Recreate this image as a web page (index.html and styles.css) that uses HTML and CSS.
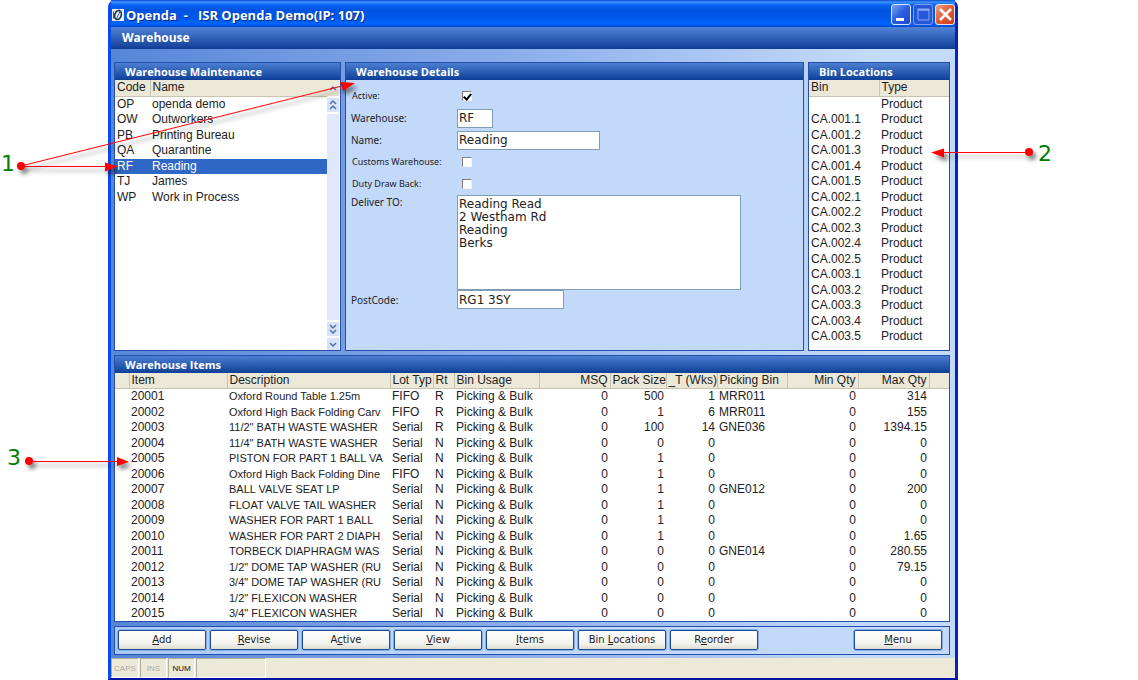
FILE: index.html
```html
<!DOCTYPE html>
<html lang="en">
<head>
<meta charset="utf-8">
<title>Openda - ISR Openda Demo</title>
<link rel="stylesheet" href="styles.css">
</head>
<body>
<main class="window">
  <header class="titlebar">
    <svg class="app-icon" width="12" height="12" viewBox="0 0 12 12" aria-hidden="true"><rect width="12" height="12" fill="#e8eef4"/><ellipse cx="6" cy="6" rx="3.2" ry="4.6" fill="none" stroke="#14304c" stroke-width="1.6" transform="rotate(18 6 6)"/><path d="M8.5 1.5 4 10.5M1.5 2.500v7" stroke="#3c6080" stroke-width="1"/></svg>
    <h1 class="title">Openda&nbsp; -&nbsp;&nbsp; ISR Openda Demo(IP: 107)</h1>
    <div class="caption-buttons">
      <button class="cap" aria-label="Minimize"><svg width="19" height="19" viewBox="0 0 19 19"><path d="M4 13h8v3H4z" fill="#fff"/></svg></button>
      <button class="cap cap-off" aria-label="Maximize"><svg width="19" height="19" viewBox="0 0 19 19"><path d="M4 5h11v10H4z" fill="none" stroke="#8aa8f4"/><path d="M3.500 4.500h12" stroke="#8aa8f4" stroke-width="2"/></svg></button>
      <button class="cap cap-close" aria-label="Close"><svg width="19" height="19" viewBox="0 0 19 19"><path d="m4 4 11 11M15 4 4 15" stroke="#fff" stroke-width="2.600"/></svg></button>
    </div>
  </header>
  <h2 class="screen-title">Warehouse</h2>

  <div class="workspace">
    <div class="top-row">
      <section class="panel">
        <h3 class="panel-title">Warehouse Maintenance</h3>
        <div class="list-area">
          <table class="grid codes">
            <colgroup><col class="c-code"><col></colgroup>
            <thead><tr><th>Code<th>Name</thead>
            <tbody>
              <tr><td>OP<td>openda demo
              <tr><td>OW<td>Outworkers
              <tr><td>PB<td>Printing Bureau
              <tr><td>QA<td>Quarantine
              <tr class="selected"><td>RF<td>Reading
              <tr><td>TJ<td>James
              <tr><td>WP<td>Work in Process
            </tbody>
          </table>
          <div class="scroll">
            <button class="sb sb-top" aria-label="Line up"><svg width="12" height="12" viewBox="0 0 12 12"><path d="m3 8 3-3 3 3"/></svg></button>
            <button class="sb" aria-label="Page up"><svg width="12" height="14" viewBox="0 0 12 14"><path d="m3 6 3-3 3 3M3 11l3-3 3 3"/></svg></button>
            <div class="track"></div>
            <button class="sb" aria-label="Page down"><svg width="12" height="14" viewBox="0 0 12 14"><path d="m3 3 3 3 3-3M3 8l3 3 3-3"/></svg></button>
            <button class="sb" aria-label="Line down"><svg width="12" height="12" viewBox="0 0 12 12"><path d="m3 5 3 3 3-3"/></svg></button>
          </div>
        </div>
      </section>

      <section class="panel">
        <h3 class="panel-title">Warehouse Details</h3>
        <form class="details">
          <label class="small" for="active">Active:</label><input class="tick" type="checkbox" id="active" checked>
          <label for="wh">Warehouse:</label><input class="field w-code" id="wh" value="RF">
          <label for="name">Name:</label><input class="field w-name" id="name" value="Reading">
          <label class="small" for="customs">Customs Warehouse:</label><input class="tick" type="checkbox" id="customs">
          <label class="small" for="duty">Duty Draw Back:</label><input class="tick" type="checkbox" id="duty">
          <label class="top" for="deliver">Deliver TO:</label><textarea class="field w-address" id="deliver">Reading Read
2 Westham Rd
Reading
Berks</textarea>
          <label for="post">PostCode:</label><input class="field w-post" id="post" value="RG1 3SY">
        </form>
      </section>

      <section class="panel">
        <h3 class="panel-title">Bin Locations</h3>
        <table class="grid bins">
          <thead><tr><th>Bin<th>Type</thead>
          <tbody>
            <tr><td><td>Product
            <tr><td>CA.001.1<td>Product
            <tr><td>CA.001.2<td>Product
            <tr><td>CA.001.3<td>Product
            <tr><td>CA.001.4<td>Product
            <tr><td>CA.001.5<td>Product
            <tr><td>CA.002.1<td>Product
            <tr><td>CA.002.2<td>Product
            <tr><td>CA.002.3<td>Product
            <tr><td>CA.002.4<td>Product
            <tr><td>CA.002.5<td>Product
            <tr><td>CA.003.1<td>Product
            <tr><td>CA.003.2<td>Product
            <tr><td>CA.003.3<td>Product
            <tr><td>CA.003.4<td>Product
            <tr><td>CA.003.5<td>Product
          </tbody>
        </table>
      </section>
    </div>

    <section class="panel items-panel">
      <h3 class="panel-title">Warehouse Items</h3>
      <table class="grid items">
        <colgroup><col class="i-mark"><col class="i-item"><col><col class="i-lot"><col class="i-rt"><col class="i-usage"><col class="i-qty"><col class="i-pack"><col class="i-wks"><col class="i-pick"><col class="i-qty"><col class="i-qty"><col class="i-end"></colgroup>
        <thead><tr><th><th>Item<th>Description<th>Lot Typ<th>Rt<th>Bin Usage<th>MSQ<th>Pack Size<th>_T (Wks)<th>Picking Bin<th>Min Qty<th>Max Qty<th></thead>
        <tbody>
          <tr><td><td>20001<td>Oxford Round Table 1.25m<td>FIFO<td>R<td>Picking &amp; Bulk<td>0<td>500<td>1<td>MRR011<td>0<td>314<td>
          <tr><td><td>20002<td>Oxford High Back Folding Carv<td>FIFO<td>R<td>Picking &amp; Bulk<td>0<td>1<td>6<td>MRR011<td>0<td>155<td>
          <tr><td><td>20003<td>11/2" BATH WASTE WASHER<td>Serial<td>R<td>Picking &amp; Bulk<td>0<td>100<td>14<td>GNE036<td>0<td>1394.15<td>
          <tr><td><td>20004<td>11/4" BATH WASTE WASHER<td>Serial<td>N<td>Picking &amp; Bulk<td>0<td>0<td>0<td><td>0<td>0<td>
          <tr><td><td>20005<td>PISTON FOR PART 1 BALL VA<td>Serial<td>N<td>Picking &amp; Bulk<td>0<td>1<td>0<td><td>0<td>0<td>
          <tr><td><td>20006<td>Oxford High Back Folding Dine<td>FIFO<td>N<td>Picking &amp; Bulk<td>0<td>1<td>0<td><td>0<td>0<td>
          <tr><td><td>20007<td>BALL VALVE SEAT LP<td>Serial<td>N<td>Picking &amp; Bulk<td>0<td>1<td>0<td>GNE012<td>0<td>200<td>
          <tr><td><td>20008<td>FLOAT VALVE TAIL WASHER<td>Serial<td>N<td>Picking &amp; Bulk<td>0<td>1<td>0<td><td>0<td>0<td>
          <tr><td><td>20009<td>WASHER FOR PART 1 BALL<td>Serial<td>N<td>Picking &amp; Bulk<td>0<td>1<td>0<td><td>0<td>0<td>
          <tr><td><td>20010<td>WASHER FOR PART 2 DIAPH<td>Serial<td>N<td>Picking &amp; Bulk<td>0<td>1<td>0<td><td>0<td>1.65<td>
          <tr><td><td>20011<td>TORBECK DIAPHRAGM WAS<td>Serial<td>N<td>Picking &amp; Bulk<td>0<td>0<td>0<td>GNE014<td>0<td>280.55<td>
          <tr><td><td>20012<td>1/2" DOME TAP WASHER (RU<td>Serial<td>N<td>Picking &amp; Bulk<td>0<td>0<td>0<td><td>0<td>79.15<td>
          <tr><td><td>20013<td>3/4" DOME TAP WASHER (RU<td>Serial<td>N<td>Picking &amp; Bulk<td>0<td>0<td>0<td><td>0<td>0<td>
          <tr><td><td>20014<td>1/2" FLEXICON WASHER<td>Serial<td>N<td>Picking &amp; Bulk<td>0<td>0<td>0<td><td>0<td>0<td>
          <tr><td><td>20015<td>3/4" FLEXICON WASHER<td>Serial<td>N<td>Picking &amp; Bulk<td>0<td>0<td>0<td><td>0<td>0<td>
        </tbody>
      </table>
    </section>

    <nav class="actions">
      <button class="action"><u>A</u>dd</button>
      <button class="action"><u>R</u>evise</button>
      <button class="action">A<u>c</u>tive</button>
      <button class="action"><u>V</u>iew</button>
      <button class="action"><u>I</u>tems</button>
      <button class="action">Bin <u>L</u>ocations</button>
      <button class="action">R<u>e</u>order</button>
      <button class="action last"><u>M</u>enu</button>
    </nav>
  </div>

  <footer class="status">
    <span class="cell w-caps">CAPS</span><span class="cell w-ins">INS</span><span class="cell w-num on">NUM</span><span class="cell w-blank"></span>
  </footer>
</main>

<svg class="notes notes-left" width="360" height="680" viewBox="0 0 360 680">
  <g class="arrow">
    <circle cx="21" cy="166" r="4"/><path class="line" d="M21 166 340 86.500M21 166.500h88"/>
    <path d="m355 83-12 8-3-9zM118 166.500l-13-4v9z"/>
    <circle cx="29" cy="461" r="4"/><path class="line" d="M29 461.500h90"/><path d="m129 462-12-5v9z"/>
  </g>
  <text x="1" y="171">1</text><text x="7" y="465">3</text>
</svg>
<svg class="notes notes-right" width="218" height="200" viewBox="0 0 218 200">
  <g class="arrow"><circle cx="109" cy="152" r="4"/><path class="line" d="M20 152.500h89"/><path d="m11 152.500 13-4v9z"/></g>
  <text x="118" y="161">2</text>
</svg>
</body>
</html>
```
FILE: styles.css
```css
* { box-sizing: border-box; }
body {
  position: relative;
  margin: 0;
  padding: 0 180px 0 108px;
  background: #fff;
  color: #222;
  font: 12px/15px "Liberation Sans", Arial, sans-serif;
}
h1, h2, h3 { margin: 0; color: #fff; font-family: "Open Sans", "Noto Sans", sans-serif; font-weight: 700; }
button { padding: 0; font: inherit; }

/* Window frame */
.window {
  display: flex;
  flex-direction: column;
  min-height: 100vh;
  border: solid #0831d9;
  border-width: 0 3px 2px;
  border-color: #0a3fe0 #0a22b8 #0014a0 #0a4ae8;
  border-radius: 7px 7px 0 0;
  background: #0055e5;
}
.titlebar {
  display: flex;
  align-items: center;
  height: 27px;
  padding: 2px 0 0 1px;
  gap: 2px;
  background: linear-gradient(#0a48c8 0, #3c92ff 2px, #0a63f2 5px, #0053e0 10px, #0058ea 18px, #0066ff 24px, #0046c8 27px);
}
.title { font-size: 13px; line-height: 18px; text-shadow: 1px 1px #0a2a80; }
.caption-buttons { display: flex; gap: 2px; margin-left: auto; }
.cap {
  width: 20px;
  height: 21px;
  border: 1px solid #dce6fb;
  border-radius: 3px;
  background: linear-gradient(135deg, #7aa2f4, #2a5ce0 50%, #1c4cd0);
}
.cap svg { display: block; }
.cap-off { border-color: #7d9df0; background: #2458d8; }
.cap-close { background: linear-gradient(135deg, #f0a080, #e25a34 50%, #c8401c); }
.screen-title {
  padding: 0 11px;
  font-size: 12px;
  line-height: 22px;
  background: linear-gradient(#5083d6, #1a48a2 85%, #103c90);
}

.workspace {
  display: flex;
  flex: 1;
  flex-direction: column;
  gap: 4px;
  padding: 13px 5px 3px 3px;
  background: linear-gradient(90deg, #5686d8, #8eb0ec 50%, #c4daf9 90%);
}
.top-row { display: grid; grid-template-columns: 227px 1fr 142px; gap: 4px; }

/* Panels */
.panel { display: flex; flex-direction: column; border: 1px solid #2450ac; background: #fff; min-width: 0; }
.panel-title {
  padding: 0 10px;
  font-size: 11px;
  line-height: 17px;
  background: linear-gradient(#4c7fd2, #0d3f98);
}
.items-panel { flex: 1; }

/* Tables */
.grid { width: 100%; table-layout: fixed; border-collapse: collapse; }
.grid th, .grid td { padding: 0 2px; overflow: hidden; text-align: left; font-weight: 400; white-space: nowrap; line-height: 15px; }
.grid th {
  height: 16px;
  background: #ebe8d8;
  border-bottom: 1px solid #c8c4b0;
  border-right: 1px solid #c8c4b0;
}
.grid th:last-child { border-right: 0; }
.grid tbody tr { height: 15px; }
.grid tbody tr:nth-child(even) { height: 16px; }
.list-area { display: flex; flex: 1; }
.codes { flex: 1; align-self: flex-start; width: auto; }
.codes .selected { background: #2f67c4; color: #fff; }
.c-code { width: 35px; }
.bins { margin-bottom: 5px; }
.i-mark { width: 14px; }
.i-item { width: 98px; }
.i-lot { width: 43px; }
.i-rt { width: 21px; }
.i-usage { width: 85px; }
.i-qty { width: 71px; }
.i-pack { width: 56px; }
.i-wks { width: 51px; }
.i-pick { width: 70px; }
.i-end { width: 20px; }
.items td:nth-child(3) { font-size: 11px; }
.items :is(th, td):is(:nth-child(7), :nth-child(8), :nth-child(9), :nth-child(11), :nth-child(12)) { text-align: right; }

/* Scroll bar */
.scroll { display: flex; flex-direction: column; gap: 2px; width: 13px; padding-right: 1px; }
.sb { display: block; border: 0; background: #d6e3fb; }
.sb-top { height: 16px; background: #ebe8d8; }
.sb svg { display: block; fill: none; stroke: #5673a8; stroke-width: 1.5; }
.track { flex: 1; background: #dfe8fc; }

/* Details form */
.details {
  flex: 1;
  display: grid;
  grid-template-columns: 106px 1fr;
  grid-template-rows: 22px 22px 22px 22px 22px auto 19px;
  align-content: start;
  align-items: center;
  justify-items: start;
  padding: 5px;
  background: #c3d9fa;
  font-family: "DejaVu Sans", Verdana, sans-serif;
}
.details label { font-size: 10px; line-height: 14px; font-family: "Noto Sans", Tahoma, sans-serif; }
.details .small { font-size: 9px; padding-left: 1px; }
.details .top { align-self: start; }
.field {
  height: 19px;
  margin: 0;
  padding: 0 1px;
  border: 1px solid #7f9db9;
  border-radius: 0;
  background: #fff;
  color: #222;
  font: 12px/13px "DejaVu Sans", Verdana, sans-serif;
}
.w-code { width: 36px; }
.w-name { width: 143px; }
.w-address { width: 284px; height: 95px; padding-top: 2px; resize: none; }
.w-post { width: 107px; }
.tick {
  appearance: none;
  width: 10px;
  height: 10px;
  margin: 0 5px;
  border: 1px solid;
  border-color: #808080 #f4f2e8 #f4f2e8 #808080;
  background: #fff;
}
.tick:checked::before {
  content: "";
  display: block;
  width: 3px;
  height: 6px;
  margin: 0 2px;
  border: solid #000;
  border-width: 0 2px 2px 0;
  transform: rotate(40deg);
}

/* Command buttons */
.actions {
  display: flex;
  gap: 4px;
  padding: 3px 7px 4px 3px;
  border: 1px solid #2450ac;
  background: linear-gradient(90deg, #a9c8f8, #c3d9fa 50%);
}
.action {
  width: 88px;
  height: 20px;
  border: 1px solid #1c4c96;
  border-radius: 2px;
  box-shadow: 0 0 0 1px #88aeea;
  background: linear-gradient(#fff, #f3f3ee 70%, #dcdcd0);
  color: #222;
  font: 10px/16px "DejaVu Sans", Verdana, sans-serif;
}
.last { margin-left: auto; }

/* Status bar */
.status { display: flex; gap: 1px; height: 20px; background: #ece9d8; font-size: 8px; }
.cell { padding-top: 2px; border: 1px solid; border-color: #b4b09c #fff #fff #b4b09c; color: #aca899; text-align: center; }
.on { color: #111; }
.w-caps { width: 28px; }
.w-ins { width: 27px; }
.w-num { width: 27px; }
.w-blank { width: 70px; }

/* Callouts over the window */
.notes { position: absolute; top: 0; overflow: visible; pointer-events: none; }
.notes-left { left: 0; }
.notes-right { right: 0; }
.notes text { fill: #008000; font: 22px "DejaVu Sans", Verdana, sans-serif; }
.arrow { fill: #f00; filter: drop-shadow(3px 4px 2px rgba(0, 0, 0, .5)); }
.line { stroke: #f00; stroke-width: 1; }
```
